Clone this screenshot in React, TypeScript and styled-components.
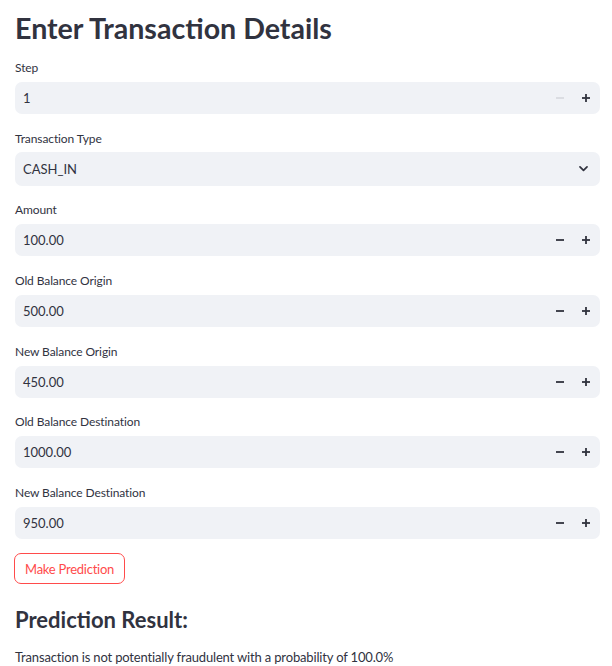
import React from "react";
import styled, { createGlobalStyle } from "styled-components";

const Global = createGlobalStyle`
  html, body { margin: 0; padding: 0; background: #ffffff; }
  body { font-family: Lato, "Open Sans", sans-serif; color: #31333f; }
  * { box-sizing: border-box; }
`;

const Page = styled.div`
  width: 612px;
  padding: 8px 12px 0 15px;
  display: flex;
  flex-direction: column;
`;

const Title = styled.h1`
  margin: 0 0 12px 0;
  font-size: 28.6px;
  line-height: 40px;
  font-weight: 700;
  color: #31333f;
`;

const Form = styled.div`
  display: flex;
  flex-direction: column;
  gap: 16.7px;
`;

const Field = styled.div`
  display: flex;
  flex-direction: column;
`;

const Label = styled.label<{ $gap: number }>`
  font-size: 12px;
  line-height: 16px;
  letter-spacing: -0.1px;
  margin-bottom: ${(p) => p.$gap}px;
  color: #31333f;
`;

const Box = styled.div<{ $h: number; $padRight: number }>`
  height: ${(p) => p.$h}px;
  background: #f0f2f6;
  border-radius: 7px;
  display: flex;
  align-items: center;
  padding: 0 ${(p) => p.$padRight}px 0 8px;
  font-size: 13px;
  color: #31333f;
`;

const Value = styled.span`
  flex: 1;
`;

const StepBtn = styled.span`
  width: 26px;
  height: 100%;
  display: flex;
  align-items: center;
  justify-content: center;
`;

const Chevron = styled.span`
  width: 24px;
  display: flex;
  align-items: center;
  justify-content: center;
`;

const Button = styled.button`
  align-self: flex-start;
  margin-top: 14px;
  margin-left: -1px;
  height: 31px;
  padding: 0 10px;
  background: #ffffff;
  border: 1px solid #ff4b4b;
  border-radius: 7px;
  color: #ff4b4b;
  font-family: inherit;
  font-size: 13px;
  letter-spacing: -0.25px;
`;

const Sub = styled.h2`
  margin: 20px 0 0 0;
  font-size: 22px;
  line-height: 32px;
  font-weight: 700;
  color: #31333f;
`;

const Result = styled.p`
  margin: 11px 0 0 0;
  font-size: 13px;
  line-height: 20px;
  letter-spacing: -0.16px;
  color: #31333f;
`;

const Minus = ({ c }: { c: string }) => (
  <svg width="8" height="8" viewBox="0 0 8 8">
    <rect x="0" y="3.1" width="8" height="1.8" fill={c} />
  </svg>
);
const Plus = () => (
  <svg width="8" height="8" viewBox="0 0 8 8">
    <rect x="0" y="3.1" width="8" height="1.8" fill="#31333f" />
    <rect x="3.1" y="0" width="1.8" height="8" fill="#31333f" />
  </svg>
);

const NumberField = ({ label, value, minDisabled }: { label: string; value: string; minDisabled?: boolean }) => (
  <Field>
    <Label $gap={6}>{label}</Label>
    <Box $h={32} $padRight={1}>
      <Value>{value}</Value>
      <StepBtn>
        <Minus c={minDisabled ? "#d9dbe0" : "#31333f"} />
      </StepBtn>
      <StepBtn>
        <Plus />
      </StepBtn>
    </Box>
  </Field>
);

const fields = [
  ["Amount", "100.00"],
  ["Old Balance Origin", "500.00"],
  ["New Balance Origin", "450.00"],
  ["Old Balance Destination", "1000.00"],
  ["New Balance Destination", "950.00"],
];

export default function App() {
  return (
    <>
      <Global />
      <Page>
        <Title>Enter Transaction Details</Title>
        <Form>
          <NumberField label="Step" value="1" minDisabled />
          <Field>
            <Label $gap={5}>Transaction Type</Label>
            <Box $h={34} $padRight={5}>
              <Value>CASH_IN</Value>
              <Chevron>
                <svg width="13" height="13" viewBox="0 0 24 24" fill="none" stroke="#31333f" strokeWidth="3.2" strokeLinecap="round" strokeLinejoin="round">
                  <path d="M5.5 9l6.5 6.5 6.5-6.5" />
                </svg>
              </Chevron>
            </Box>
          </Field>
          {fields.map(([l, v]) => (
            <NumberField key={l} label={l} value={v} />
          ))}
        </Form>
        <Button>Make Prediction</Button>
        <Sub>Prediction Result:</Sub>
        <Result>Transaction is not potentially fraudulent with a probability of 100.0%</Result>
      </Page>
    </>
  );
}
